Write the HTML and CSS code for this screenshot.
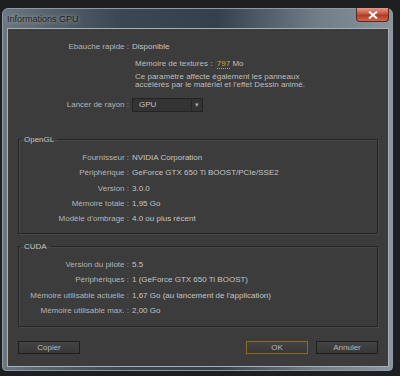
FILE: index.html
```html
<!DOCTYPE html>
<html lang="fr">
<head>
<meta charset="UTF-8">
<meta name="viewport" content="width=device-width, initial-scale=1.0">
<title>Informations GPU</title>
<link rel="stylesheet" href="styles.css">
</head>
<body>

<div class="fenetre">
  <div class="titre">
    <span class="titre-texte">Informations GPU</span>
    <button class="fermer" type="button">
      <svg width="10" height="8" viewBox="0 0 10 8"><path d="M1 0.5 L9 7.5 M9 0.5 L1 7.5" stroke="#fff" stroke-width="2"/></svg>
    </button>
  </div>

  <div class="contenu">
    <div class="haut">
      <div class="ligne">
        <span class="label">Ebauche rapide :</span>
        <span class="valeur">Disponible</span>
      </div>

      <div class="textures">
        <div>Mémoire de textures :&nbsp; <span class="chiffre">797</span> Mo</div>
        <p>Ce paramètre affecte également les panneaux<br>accélérés par le matériel et l'effet Dessin animé.</p>
      </div>

      <div class="ligne rayon">
        <span class="label">Lancer de rayon :</span>
        <div class="select">
          <span>GPU</span>
          <span class="fleche">&#9662;</span>
        </div>
      </div>
    </div>

    <fieldset class="groupe opengl">
      <legend>OpenGL</legend>
      <div class="ligne"><span class="label">Fournisseur :</span><span class="valeur">NVIDIA Corporation</span></div>
      <div class="ligne"><span class="label">Périphérique :</span><span class="valeur">GeForce GTX 650 Ti BOOST/PCIe/SSE2</span></div>
      <div class="ligne"><span class="label">Version :</span><span class="valeur">3.0.0</span></div>
      <div class="ligne"><span class="label">Mémoire totale :</span><span class="valeur">1,95 Go</span></div>
      <div class="ligne"><span class="label">Modèle d'ombrage :</span><span class="valeur">4.0 ou plus récent</span></div>
    </fieldset>

    <fieldset class="groupe cuda">
      <legend>CUDA</legend>
      <div class="ligne"><span class="label">Version du pilote :</span><span class="valeur">5.5</span></div>
      <div class="ligne"><span class="label">Périphériques :</span><span class="valeur">1 (GeForce GTX 650 Ti BOOST)</span></div>
      <div class="ligne"><span class="label">Mémoire utilisable actuelle :</span><span class="valeur">1,67 Go (au lancement de l'application)</span></div>
      <div class="ligne"><span class="label">Mémoire utilisable max. :</span><span class="valeur">2,00 Go</span></div>
    </fieldset>

    <div class="boutons">
      <button class="btn" type="button">Copier</button>
      <span class="espace"></span>
      <button class="btn btn-ok" type="button">OK</button>
      <button class="btn" type="button">Annuler</button>
    </div>
  </div>
</div>

</body>
</html>
```

FILE: styles.css
```css
body {
  margin: 0;
  background-color: #1e1f21;
  font-family: "Liberation Sans", Arial, sans-serif;
  font-size: 8px;
  color: #c4c4c4;
}

.fenetre {
  box-sizing: border-box;
  width: 391px;
  height: 363px;
  margin: 8px 0 0 2px;
  padding: 0 3px 3px 4px;
  border: 1px solid #8d9aa6;
  border-radius: 6px 6px 4px 4px;
  background: linear-gradient(90deg, #6d777f 0%, #56616b 12%, #3b4753 30%, #34404c 55%, #6f7b85 80%, #8a959e 100%);
  display: flex;
  flex-direction: column;
}

.titre {
  height: 19px;
  display: flex;
  justify-content: space-between;
  align-items: flex-start;
}

.titre-texte {
  margin-top: 5px;
  font-size: 9px;
  color: #1c1f22;
  text-shadow: 0 0 4px #b8c2ca;
}

.fermer {
  width: 33px;
  height: 14px;
  margin-top: -1px;
  padding: 0;
  border: 1px solid #5a2a22;
  border-top: none;
  border-radius: 0 0 4px 4px;
  background: linear-gradient(180deg, #e49a88 0%, #c85540 45%, #b03a24 55%, #d0684c 100%);
  display: flex;
  align-items: center;
  justify-content: center;
}

.contenu {
  flex: 1;
  border: 1px solid #a6b0b8;
  background-color: #3c3c3c;
  display: flex;
  flex-direction: column;
}

.ligne {
  display: grid;
  grid-template-columns: 121px 1fr;
  column-gap: 3px;
  align-items: center;
  height: 15.5px;
}

.label {
  text-align: right;
  color: #b4b4b4;
  white-space: nowrap;
}

.valeur {
  white-space: nowrap;
}

.haut {
  padding-top: 10px;
  height: 96px;
}

.textures {
  margin: 4px 0 0 127px;
  color: #bdbdbd;
}

.textures p {
  margin: 5px 0 0;
  line-height: 8.5px;
}

.chiffre {
  color: #d0a23a;
  border-bottom: 1px dotted #d0a23a;
}

.rayon {
  margin-top: 8px;
  height: 14px;
}

.select {
  box-sizing: border-box;
  width: 71px;
  height: 14px;
  border: 1px solid #232323;
  background-color: #333333;
  display: flex;
  align-items: center;
  padding-left: 6px;
}

.select span:first-child {
  flex: 1;
}

.fleche {
  width: 10px;
  height: 12px;
  border-left: 1px solid #262626;
  text-align: center;
  line-height: 12px;
  font-size: 7px;
  color: #aaaaaa;
}

.groupe {
  box-sizing: border-box;
  margin: 0 10px 0 10px;
  padding: 6px 0 3px 0;
  border: 1px solid #262626;
  box-shadow: inset 1px 1px 0 #484848, 1px 1px 0 #484848;
}

.groupe legend {
  padding: 0 3px;
  margin-left: 2px;
  color: #c0c0c0;
}

.groupe .ligne {
  grid-template-columns: 110px 1fr;
  height: 15.25px;
}

.opengl {
  height: 99px;
}

.cuda {
  margin-top: 8px;
  height: 85px;
}

.boutons {
  display: flex;
  gap: 8px;
  margin: 14px 10px 0 10px;
}

.espace {
  flex: 1;
}

.btn {
  width: 62px;
  height: 13px;
  padding: 0;
  border: 1px solid #1e1e1e;
  background: linear-gradient(180deg, #434343, #383838);
  color: #b8b8b8;
  font-family: "Liberation Sans", Arial, sans-serif;
  font-size: 8px;
}

.btn-ok {
  border-color: #8c6a20;
}
```
